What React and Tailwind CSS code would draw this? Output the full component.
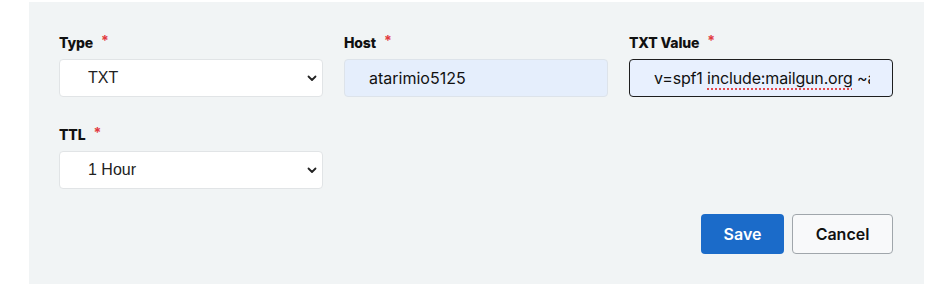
function Label({ children }) {
  return (
    <div className="mb-[6px] flex h-5 items-center font-['Inter',sans-serif] text-[14px] font-extrabold leading-5 tracking-[-0.01em] text-[#111111]">
      {children}
      <span className="ml-2 -mt-1 text-[14px] font-bold text-[#e23a3f]">*</span>
    </div>
  );
}

function Chevron() {
  return (
    <svg className="absolute right-[5px] top-1/2 -translate-y-1/2" width="10" height="10" viewBox="0 0 10 10" fill="none">
      <path d="M1.5 3.5L5 7L8.5 3.5" stroke="#222" strokeWidth="1.8" strokeLinecap="round" strokeLinejoin="round" />
    </svg>
  );
}

function SelectBox({ value }) {
  return (
    <div className="relative flex h-[38px] items-center rounded-[4px] border border-[#e1e4e6] bg-white pl-[28px] font-['Liberation_Sans',Arial,sans-serif] text-[16px] text-[#222222]">
      {value}
      <Chevron />
    </div>
  );
}

export default function App() {
  return (
    <div className="h-[302px] w-[951px] bg-white pt-[2px] pl-[29px]">
      <div className="h-[282px] w-[895px] bg-[#f1f4f5] pl-[30px] pr-[31px] pt-[31px]">
        <div className="grid grid-cols-3 gap-x-[21px] gap-y-[28px]">
          <div>
            <Label>Type</Label>
            <SelectBox value="TXT" />
          </div>
          <div>
            <Label>Host</Label>
            <div className="flex h-[38px] items-center rounded-[4px] border border-[#dde3ea] bg-[#e5eefc] pl-[24px] font-['Inter',sans-serif] text-[16px] text-[#111111]">
              atarimio5125
            </div>
          </div>
          <div>
            <Label>TXT Value</Label>
            <div className="flex h-[38px] items-center rounded-[4px] border border-[#1e1e1e] bg-[#e8f0fe] pl-[24px] pr-[22px] font-['Inter',sans-serif] text-[16px] tracking-[-0.01em] text-[#111111]">
              <div className="overflow-hidden whitespace-nowrap">
                v=spf1{" "}
                <span className="underline decoration-[#e5484d] decoration-dotted decoration-[1.5px] underline-offset-[4px]">include:mailgun.org</span>{" "}
                ~all
              </div>
            </div>
          </div>
          <div>
            <Label>TTL</Label>
            <SelectBox value="1 Hour" />
          </div>
        </div>
        <div className="mt-[25px] flex justify-end gap-2">
          <button className="h-10 w-[83px] rounded-[4px] bg-[#1b6bc9] font-['Inter',sans-serif] text-[16px] font-semibold text-white">
            Save
          </button>
          <button className="h-10 w-[101px] rounded-[4px] border border-[#a0a6ab] bg-[#f8f9fa] font-['Inter',sans-serif] text-[16px] font-semibold text-[#111111]">
            Cancel
          </button>
        </div>
      </div>
    </div>
  );
}
